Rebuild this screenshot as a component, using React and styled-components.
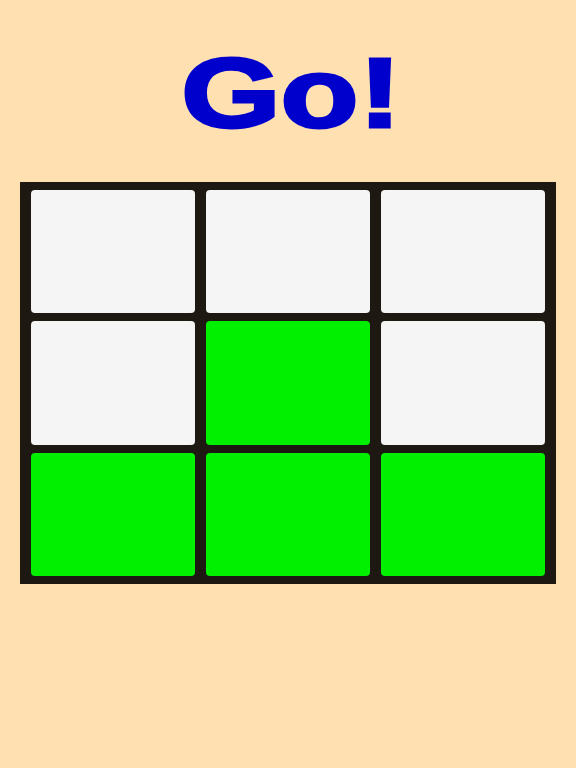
import React from "react";
import styled, { createGlobalStyle } from "styled-components";

const Global = createGlobalStyle`
  html, body { margin: 0; padding: 0; background: #FFE0B0; }
  body { font-family: "Liberation Sans", Arial, sans-serif; }
`;

const Page = styled.div`
  width: 576px;
  height: 768px;
  background: #FFE0B0;
  padding-top: 42px;
  box-sizing: border-box;
  display: flex;
  flex-direction: column;
  align-items: center;
`;

const Title = styled.h1`
  margin: 0;
  height: 101px;
  font-family: "Liberation Sans", Arial, sans-serif;
  font-weight: 700;
  font-size: 99px;
  line-height: 101px;
  color: #0000CC;
  -webkit-text-stroke: 3px #0000CC;
  transform: scaleX(1.29);
  transform-origin: center;
  margin-left: 6px;
`;

const Board = styled.div`
  margin-top: 39px;
  width: 536px;
  height: 402px;
  box-sizing: border-box;
  background: #1E1812;
  padding: 8px 11px;
  display: grid;
  grid-template-columns: repeat(3, 1fr);
  grid-template-rows: repeat(3, 1fr);
  column-gap: 11.5px;
  row-gap: 8px;
`;

const Cell = styled.div`
  border-radius: 4px;
  background: ${(p) => (p.$on ? "#00F000" : "#F5F5F5")};
`;

const cells = [0, 0, 0, 0, 1, 0, 1, 1, 1];

export default function App() {
  return (
    <>
      <Global />
      <Page>
        <Title>Go!</Title>
        <Board>
          {cells.map((c, i) => (
            <Cell key={i} $on={!!c} />
          ))}
        </Board>
      </Page>
    </>
  );
}
